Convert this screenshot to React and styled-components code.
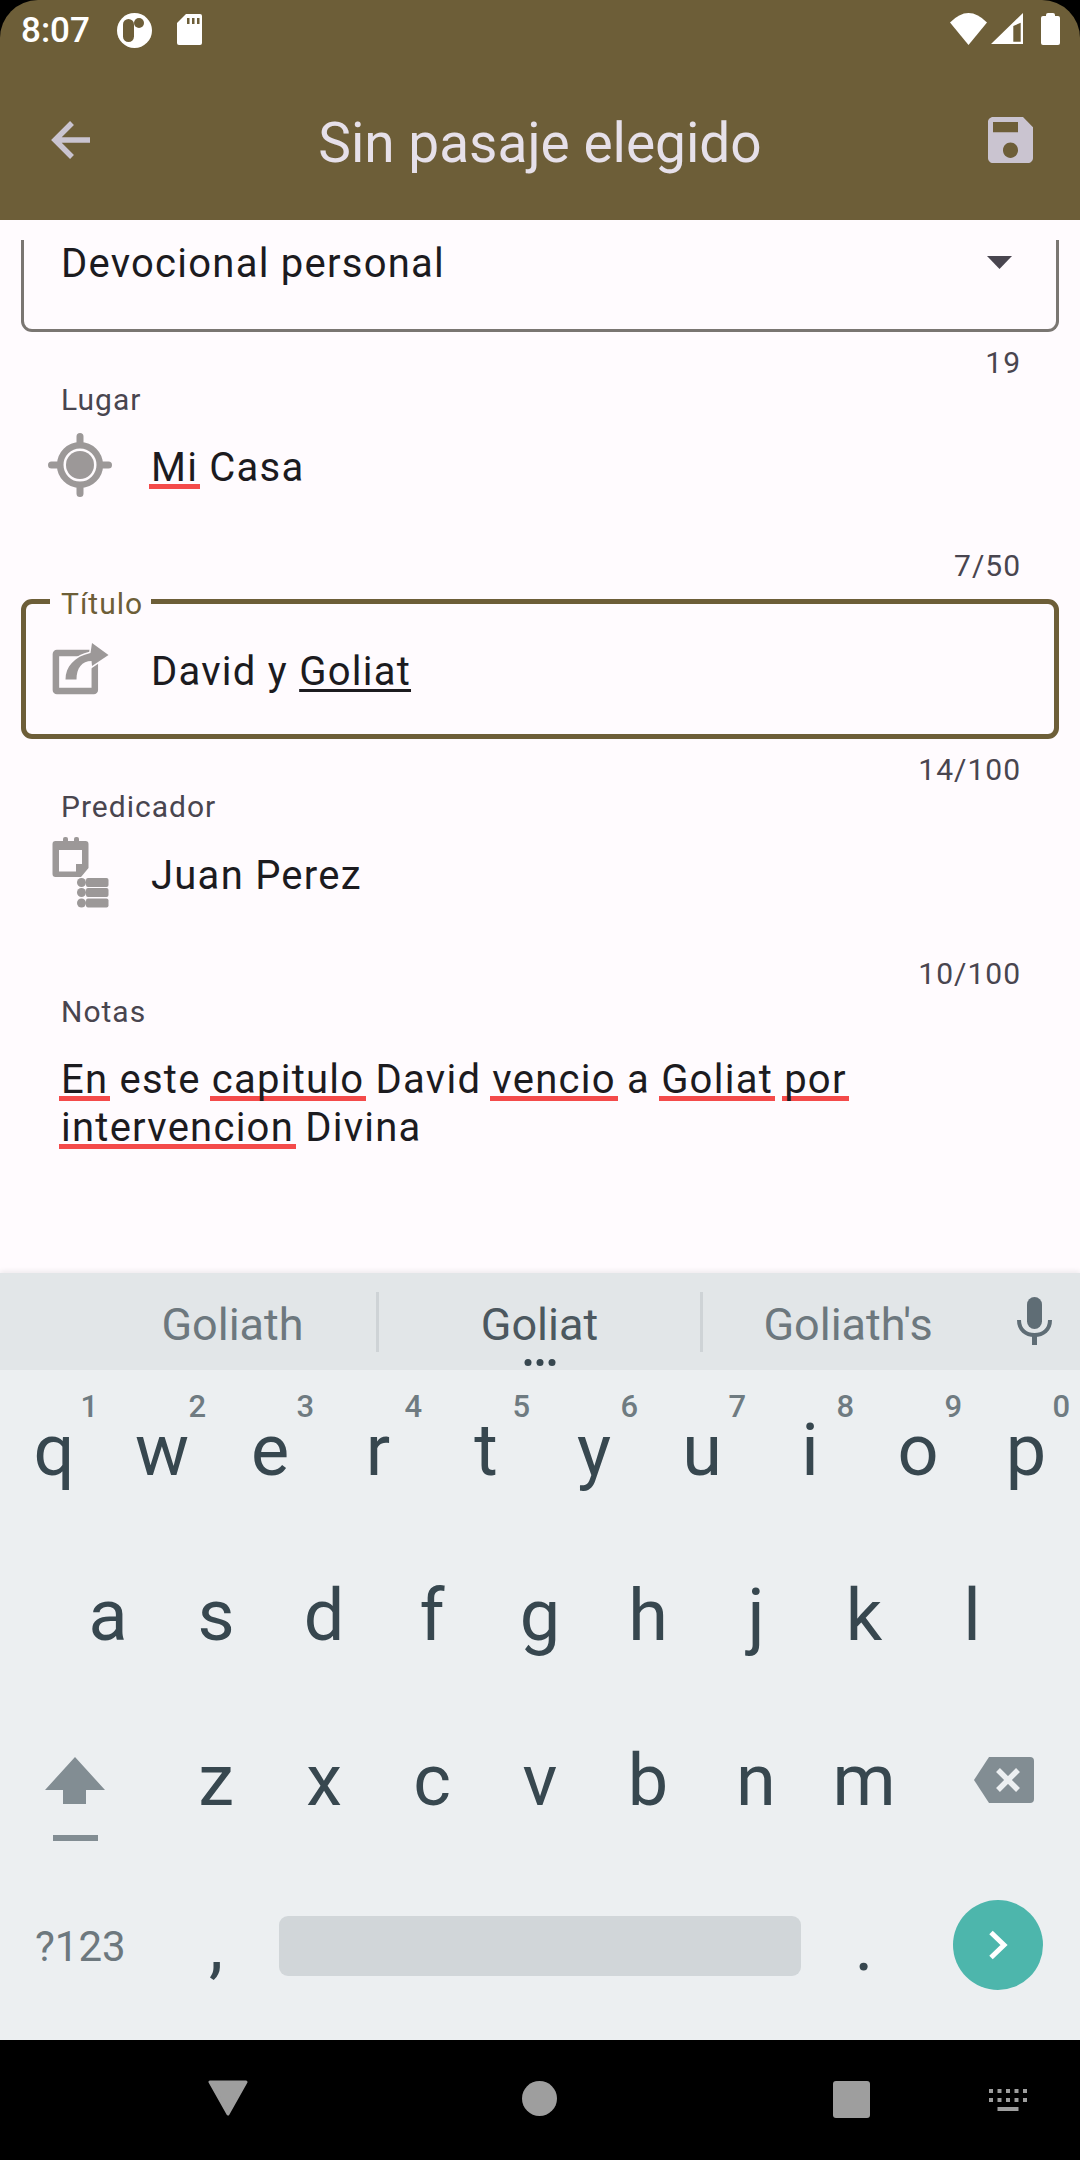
import React from "react";
import styled, { createGlobalStyle } from "styled-components";

const Global = createGlobalStyle`
  html, body { margin: 0; padding: 0; background: #000; }
  * { box-sizing: border-box; }
`;

const Screen = styled.div`
  width: 1080px;
  height: 2160px;
  display: flex;
  flex-direction: column;
  overflow: hidden;
  background: #000;
  font-family: Roboto, "Liberation Sans", sans-serif;
`;

const AppBar = styled.header`
  flex: none;
  height: 220px;
  background: #6d5e38;
  border-radius: 38px 38px 0 0;
  display: flex;
  flex-direction: column;
`;

const StatusBar = styled.div`
  height: 66px;
  padding: 13px 20px 0 21px;
  display: flex;
  justify-content: space-between;
  align-items: flex-start;
`;

const StatusGroup = styled.div`
  display: flex;
  align-items: flex-start;
`;

const Time = styled.span`
  font-size: 35px;
  line-height: 35px;
  font-weight: 500;
  color: #fff;
  width: 96px;
`;

const StatusIcon = styled.svg`
  display: block;
  flex: none;
  margin-left: ${(p) => p.$left || 0}px;
  margin-top: ${(p) => p.$top || 0}px;
`;

const Toolbar = styled.div`
  flex: 1;
  padding: 0 47px 6px 50px;
  display: flex;
  align-items: center;
  justify-content: space-between;
`;

const Title = styled.h1`
  margin: 0 0 0 2px;
  padding-top: 6px;
  font-size: 55px;
  line-height: 64px;
  font-weight: 400;
  color: #e6e0e9;
`;

const Form = styled.main`
  flex: none;
  height: 1053px;
  padding: 20px 21px 0;
  background: #fffbfe;
`;

const SelectBox = styled.div`
  height: 92px;
  padding: 2px 44px 0 37px;
  border: 3px solid #7a7672;
  border-top: none;
  border-radius: 0 0 11px 11px;
  display: flex;
  justify-content: space-between;
  align-items: flex-start;
`;

const BodyText = styled.span`
  font-size: 40px;
  line-height: 44px;
  letter-spacing: 1.25px;
  color: #1c1b1f;
  white-space: pre-wrap;
`;

const RowText = styled(BodyText)`
  padding-top: 6px;
`;

const Caret = styled.svg`
  display: block;
  margin-top: 14px;
`;

const Counter = styled.div`
  margin-top: ${(p) => p.$top}px;
  padding-right: 38px;
  text-align: right;
  font-size: 30px;
  line-height: 30px;
  letter-spacing: 1px;
  color: #49454f;
`;

const Label = styled.div`
  margin-top: ${(p) => p.$top}px;
  padding-left: 40px;
  font-size: 30px;
  line-height: 30px;
  letter-spacing: 1px;
  color: #49454f;
`;

const InputRow = styled.div`
  margin-top: ${(p) => p.$top}px;
  padding-left: ${(p) => p.$pad}px;
  display: flex;
  align-items: center;
`;

const IconSlot = styled.svg`
  display: block;
  flex: none;
  margin-right: ${(p) => p.$gap}px;
`;

const OutlinedField = styled.div`
  position: relative;
  margin-top: 18px;
  height: 140px;
  padding-left: 26px;
  border: 5px solid #6d5e38;
  border-radius: 11px;
  display: flex;
  align-items: center;
`;

const FloatingLabel = styled.span`
  position: absolute;
  top: -15px;
  left: 24px;
  padding: 0 8px 0 11px;
  background: #fffbfe;
  font-size: 30px;
  line-height: 30px;
  letter-spacing: 1px;
  color: #6d5e38;
`;

const Spell = styled.span`
  margin: 0 -2px;
  padding: 0 2px;
  background: linear-gradient(#f44a4a, #f44a4a) no-repeat 0 40px / 100% 5px;
`;

const Composing = styled.span`
  text-decoration: underline;
  text-decoration-thickness: 3px;
  text-underline-offset: 4px;
  text-decoration-skip-ink: none;
`;

const NotesText = styled.div`
  margin-top: 29px;
  padding-left: 40px;
  padding-right: 40px;
  font-size: 40px;
  line-height: 48px;
  letter-spacing: 1.25px;
  color: #1c1b1f;
`;

const Keyboard = styled.section`
  flex: none;
  height: 767px;
  background: #eceff1;
  box-shadow: 0 -2px 5px rgba(0, 0, 0, 0.07);
  position: relative;
  display: flex;
  flex-direction: column;
`;

const Strip = styled.div`
  flex: none;
  height: 97px;
  margin-bottom: 3px;
  padding-left: 89px;
  background: #e2e6e8;
  display: flex;
  align-items: center;
`;

const Suggestion = styled.div`
  position: relative;
  width: ${(p) => p.$w}px;
  padding-top: 6px;
  text-align: center;
  font-size: 45px;
  line-height: 50px;
  color: ${(p) => (p.$main ? "#4c585f" : "#6d787e")};
`;

const Dots = styled.div`
  position: absolute;
  left: 50%;
  top: 65px;
  transform: translateX(-50%);
  display: flex;
  gap: 5px;
`;

const Dot = styled.i`
  display: block;
  width: 7px;
  height: 7px;
  border-radius: 50%;
  background: #37474f;
`;

const Divider = styled.div`
  width: 3px;
  height: 60px;
  background: #ced3d6;
`;

const MicSlot = styled.svg`
  display: block;
  margin-left: 24px;
  margin-top: -2px;
`;

const KeyRow = styled.div`
  flex: none;
  height: 165px;
  padding: 0 ${(p) => p.$inset || 0}px;
  display: flex;
`;

const Key = styled.div`
  position: relative;
  flex: none;
  width: ${(p) => p.$w || 108}px;
  height: 165px;
  text-align: center;
  font-size: 72px;
  line-height: 155px;
  color: #37474f;
`;

const Hint = styled.span`
  position: absolute;
  top: 18px;
  right: 10px;
  font-size: 31px;
  line-height: 31px;
  font-weight: 500;
  color: #6f7b81;
`;

const IconKey = styled.div`
  flex: none;
  width: 162px;
  height: 165px;
  padding: 54px 0 0 ${(p) => p.$left}px;
`;

const SymbolKey = styled.div`
  flex: none;
  width: 162px;
  padding-left: 35px;
  font-size: 42px;
  line-height: 157px;
  color: #6d787e;
`;

const SpaceBar = styled.div`
  flex: none;
  width: 522px;
  height: 60px;
  margin: 48px 9px 0 9px;
  border-radius: 9px;
  background: #d1d6d9;
`;

const EnterSlot = styled.div`
  flex: none;
  width: 162px;
  padding: 32px 0 0 35px;
`;

const EnterButton = styled.div`
  width: 90px;
  height: 90px;
  border-radius: 50%;
  background: #4db6ac;
  display: flex;
  align-items: center;
  justify-content: center;
`;

const NavBar = styled.nav`
  flex: none;
  height: 120px;
  background: #000;
  display: flex;
  align-items: center;
`;

const NavIcon = styled.svg`
  display: block;
  flex: none;
  margin-left: ${(p) => p.$left}px;
  margin-top: ${(p) => p.$top || 0}px;
`;

const white = "#fff";
const olive = "#6d5e38";
const iconGray = "#9c9898";
const formBg = "#fffbfe";

const TargetIcon = () => (
  <IconSlot $gap={39} width="64" height="64" viewBox="0 0 64 64">
    <circle cx="32" cy="32" r="19.8" fill="none" stroke={iconGray} strokeWidth="6.6" />
    <circle cx="32" cy="32" r="14" fill={iconGray} />
    <g stroke={iconGray} strokeWidth="7" strokeLinecap="round">
      <path d="M32 3.5V10M32 54V60.5M3.5 32H10M54 32H60.5" />
    </g>
  </IconSlot>
);

const ShareIcon = () => (
  <IconSlot $gap={42} width="57" height="52" viewBox="0 0 57 52">
    <rect x="3.9" y="10" width="38.9" height="38" rx="1" fill="none" stroke={iconGray} strokeWidth="6.5" />
    <path d="M13.500 36.500C13.500 24 22 13.500 38.500 10L40 0L56.500 12L40 23L39.500 18C30 18 24.500 25 24.500 36.500Z" fill={iconGray} stroke={formBg} strokeWidth="3" paintOrder="stroke" />
  </IconSlot>
);

const PlannerIcon = () => (
  <IconSlot $gap={42} width="57" height="71" viewBox="0 0 57 71">
    <path fillRule="evenodd" fill={iconGray} d="M3.5 4H33.5A3 3 0 0 1 36.5 7V31L29 40H3.5A3 3 0 0 1 .5 37V7A3 3 0 0 1 3.5 4ZM7 13V34.500H24V27H30V13Z" />
    <rect x="11" y="0" width="5" height="7" rx="2" fill={iconGray} />
    <rect x="22" y="0" width="5" height="7" rx="2" fill={iconGray} />
    <g fill={iconGray}>
      <circle cx="29.500" cy="45.500" r="4.500" />
      <rect x="34" y="41" width="22.500" height="9" rx="2" />
      <circle cx="29.500" cy="55.500" r="4.500" />
      <rect x="34" y="51" width="22.500" height="9" rx="2" />
      <circle cx="29.500" cy="66" r="4.500" />
      <rect x="34" y="61.500" width="22.500" height="9" rx="2" />
    </g>
  </IconSlot>
);

const row1 = [..."qwertyuiop"];
const row2 = [..."asdfghjkl"];
const row3 = [..."zxcvbnm"];

export default function App() {
  return (
    <Screen>
      <Global />
      <AppBar>
        <StatusBar>
          <StatusGroup>
            <Time>8:07</Time>
            <StatusIcon width="35" height="35" viewBox="0 0 35 35">
              <circle cx="17.500" cy="17.500" r="17.500" fill={white} />
              <rect x="6" y="6" width="11" height="23" rx="5.500" fill={olive} />
              <circle cx="22" cy="10" r="5" fill={olive} />
            </StatusIcon>
            <StatusIcon $left={25} $top={1} width="25" height="31" viewBox="0 0 25 31">
              <path d="M9 0H23A2 2 0 0 1 25 2V29A2 2 0 0 1 23 31H2A2 2 0 0 1 0 29V9Z" fill={white} />
              <path d="M10 4H12.500V10H10ZM15 4H17.500V10H15ZM20 4H22.500V10H20Z" fill={olive} />
            </StatusIcon>
          </StatusGroup>
          <StatusGroup>
            <StatusIcon width="37" height="32" viewBox="0 0 37 32">
              <path d="M18.500 32L0 9.500Q18.500 -9.500 37 9.500Z" fill={white} />
            </StatusIcon>
            <StatusIcon $left={4} width="32" height="31" viewBox="0 0 32 31">
              <path fillRule="evenodd" d="M0 31L32 0V31ZM22.300 13V28.700H29.700V9.700Z" fill={white} />
            </StatusIcon>
            <StatusIcon $left={18} width="19" height="32" viewBox="0 0 19 32">
              <path d="M5 3V2A2 2 0 0 1 7 0H12A2 2 0 0 1 14 2V3H17A2 2 0 0 1 19 5V30A2 2 0 0 1 17 32H2A2 2 0 0 1 0 30V5A2 2 0 0 1 2 3Z" fill={white} />
            </StatusIcon>
          </StatusGroup>
        </StatusBar>
        <Toolbar>
          <svg width="40" height="40" viewBox="0 0 40 40" style={{ display: "block" }}>
            <path d="M40 20H4M22 3L5 20L22 37" fill="none" stroke="#cac4d0" strokeWidth="5.500" />
          </svg>
          <Title>Sin pasaje elegido</Title>
          <svg width="45" height="46" viewBox="3 3 18 18" preserveAspectRatio="none" style={{ display: "block" }}>
            <path fill="#cac4d0" d="M17 3H5c-1.110 0-2 .9-2 2v14c0 1.100.89 2 2 2h14c1.100 0 2-.9 2-2V7l-4-4zm-5 16c-1.660 0-3-1.340-3-3s1.340-3 3-3 3 1.340 3 3-1.340 3-3 3zm3-10H5V5h10v4z" />
          </svg>
        </Toolbar>
      </AppBar>

      <Form>
        <SelectBox>
          <BodyText>Devocional personal</BodyText>
          <Caret width="25" height="13" viewBox="0 0 25 13">
            <path d="M0 0H25L12.500 13Z" fill="#49454f" />
          </Caret>
        </SelectBox>

        <Counter $top={16}>19</Counter>
        <Label $top={7}>Lugar</Label>
        <InputRow $top={18} $pad={27}>
          <TargetIcon />
          <RowText><Spell>Mi</Spell> Casa</RowText>
        </InputRow>

        <Counter $top={54}>7/50</Counter>
        <OutlinedField>
          <FloatingLabel>Título</FloatingLabel>
          <ShareIcon />
          <RowText>David y <Composing>Goliat</Composing></RowText>
        </OutlinedField>

        <Counter $top={16}>14/100</Counter>
        <Label $top={7}>Predicador</Label>
        <InputRow $top={15} $pad={31}>
          <PlannerIcon />
          <RowText>Juan Perez</RowText>
        </InputRow>

        <Counter $top={51}>10/100</Counter>
        <Label $top={8}>Notas</Label>
        <NotesText>
          <Spell>En</Spell> este <Spell>capitulo</Spell> David <Spell>vencio</Spell> a <Spell>Goliat</Spell> <Spell>por</Spell> <Spell>intervencion</Spell> Divina
        </NotesText>
      </Form>

      <Keyboard>
        <Strip>
          <Suggestion $w={287}>Goliath</Suggestion>
          <Divider />
          <Suggestion $w={321} $main>
            Goliat
            <Dots><Dot /><Dot /><Dot /></Dots>
          </Suggestion>
          <Divider />
          <Suggestion $w={290}>Goliath's</Suggestion>
          <MicSlot width="35" height="48" viewBox="0 0 35 48">
            <rect x="10" y="0" width="15" height="32" rx="7.500" fill="#5f6d75" />
            <path d="M2 23C2 33 9 38 17.500 38S33 33 33 23" fill="none" stroke="#5f6d75" strokeWidth="4" />
            <rect x="15" y="37" width="5" height="11" fill="#5f6d75" />
          </MicSlot>
        </Strip>

        <KeyRow>
          {row1.map((k, i) => (
            <Key key={k}>{k}<Hint>{(i + 1) % 10}</Hint></Key>
          ))}
        </KeyRow>
        <KeyRow $inset={54}>
          {row2.map((k) => <Key key={k}>{k}</Key>)}
        </KeyRow>
        <KeyRow>
          <IconKey $left={45}>
            <svg width="60" height="84" viewBox="0 0 60 84" style={{ display: "block" }}>
              <path d="M30 0L60 33H41V47H18V33H0Z" fill="#828d93" />
              <rect x="8" y="78" width="45" height="6" fill="#828d93" />
            </svg>
          </IconKey>
          {row3.map((k) => <Key key={k}>{k}</Key>)}
          <IconKey $left={56}>
            <svg width="60" height="46" viewBox="0 0 60 46" style={{ display: "block" }}>
              <path d="M15 0H56A4 4 0 0 1 60 4V42A4 4 0 0 1 56 46H15L0 23Z" fill="#828d93" />
              <path d="M24 13L44 33M44 13L24 33" stroke="#eceff1" strokeWidth="5.500" />
            </svg>
          </IconKey>
        </KeyRow>
        <KeyRow>
          <SymbolKey>?123</SymbolKey>
          <Key>,</Key>
          <SpaceBar />
          <Key>.</Key>
          <EnterSlot>
            <EnterButton>
              <svg width="20" height="30" viewBox="0 0 20 30" style={{ display: "block" }}>
                <path d="M3 2.500L16 15L3 27.500" fill="none" stroke="#fff" strokeWidth="5" />
              </svg>
            </EnterButton>
          </EnterSlot>
        </KeyRow>
      </Keyboard>

      <NavBar>
        <NavIcon $left={208} $top={-5} width="40" height="36" viewBox="0 0 40 36">
          <path d="M2 2H38L20 34Z" fill="#9e9e9e" stroke="#9e9e9e" strokeWidth="3" strokeLinejoin="round" />
        </NavIcon>
        <NavIcon $left={274} $top={-3} width="35" height="35" viewBox="0 0 35 35">
          <circle cx="17.500" cy="17.500" r="17.500" fill="#9e9e9e" />
        </NavIcon>
        <NavIcon $left={276} $top={-1} width="37" height="37" viewBox="0 0 37 37">
          <rect width="37" height="37" rx="3" fill="#9e9e9e" />
        </NavIcon>
        <NavIcon $left={119} $top={-1} width="38" height="22" viewBox="0 0 38 22">
          <path fill="#9e9e9e" d="M0 0H4V4H0ZM8.500 0H12.500V4H8.500ZM17 0H21V4H17ZM25.500 0H29.500V4H25.500ZM34 0H38V4H34ZM0 9H4V13H0ZM8.500 9H12.500V13H8.500ZM17 9H21V13H17ZM25.500 9H29.500V13H25.500ZM34 9H38V13H34ZM8.500 18H29.500V22H8.500Z" />
        </NavIcon>
      </NavBar>
    </Screen>
  );
}
